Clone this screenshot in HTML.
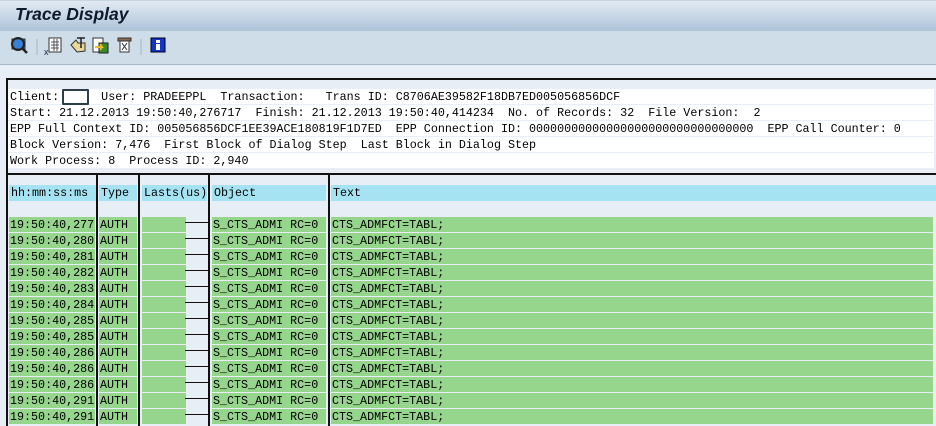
<!DOCTYPE html>
<html><head><meta charset="utf-8"><style>
*{margin:0;padding:0;box-sizing:border-box}
body{width:936px;height:426px;overflow:hidden;background:#e7eef6;position:relative;font-family:"Liberation Mono",monospace;font-size:11.7px;color:#000}
.a{position:absolute}
#title{left:0;top:0;width:936px;height:31px;background:linear-gradient(#e2eaf3,#aec4da);border-top:1px solid #c5d3e2}
#title span{position:absolute;left:15px;top:3px;font:italic bold 17.5px "Liberation Sans",sans-serif;color:#0f1a2a}
#tb{left:0;top:31px;width:936px;height:34px;background:#cfdde9;border-bottom:1px solid #a5b8cc}
.hr{left:8px;width:926px;height:15px;background:#fff;padding-left:2px;line-height:17px;white-space:pre}
.g{position:absolute;height:15px;background:#96d58c;line-height:17px;white-space:pre;padding-left:1px}
.cy{position:absolute;top:185px;height:16px;background:#a6e3f2;line-height:17px;padding-left:2px;white-space:pre}
.vl{position:absolute;top:174px;width:2px;height:252px;background:#111}
</style></head><body>
<div id="title" class="a"><span>Trace Display</span></div>
<div id="tb" class="a">
<svg width="180" height="34" style="position:absolute;left:0;top:0">
 <rect x="12" y="8" width="13" height="10" fill="#3b7fd0" stroke="#333"/>
 <circle cx="18" cy="13" r="6" fill="none" stroke="#222" stroke-width="2"/>
 <line x1="22" y1="17" x2="27" y2="22" stroke="#222" stroke-width="2.5"/>
 <line x1="37" y1="8" x2="37" y2="24" stroke="#a8b8c8"/>
 <rect x="49" y="7" width="12" height="14" fill="#fff" stroke="#333"/>
 <path d="M51 11h8M51 14h8M51 17h8M54 8v12M57 8v12" stroke="#555"/>
 <text x="44" y="24" font-size="9" font-family="Liberation Sans" fill="#224">x</text>
 <path d="M71 14l5-5 2 3 7 0 0 8-8 1z" fill="#ead79a" stroke="#333"/>
 <path d="M77 7h8M81 7v10" stroke="#222" stroke-width="1.5"/>
 <rect x="93" y="7" width="10" height="14" fill="#fff" stroke="#333"/>
 <rect x="99" y="12" width="9" height="10" fill="#3b8a2c" stroke="#222"/>
 <path d="M95 16h7l-2-3M102 16l-2 3" stroke="#e8c020" stroke-width="2" fill="none"/>
 <rect x="118" y="7" width="13" height="3" fill="#8a6a50" stroke="#333"/>
 <rect x="120" y="10" width="9" height="11" fill="#fff" stroke="#333"/>
 <path d="M122 12l5 7M127 12l-5 7" stroke="#333"/>
 <line x1="141" y1="8" x2="141" y2="24" stroke="#a8b8c8"/>
 <rect x="151" y="7" width="14" height="14" fill="#1433c8" stroke="#001"/>
 <rect x="156" y="9" width="4" height="3" fill="#fff"/><rect x="156" y="13" width="4" height="6" fill="#fff"/>
</svg></div>
<div class="a" style="left:6px;top:78px;width:930px;height:2px;background:#111"></div>
<div class="a" style="left:6px;top:78px;width:2px;height:348px;background:#111"></div>
<div class="a hr" style="top:89px">Client:      User: PRADEEPPL  Transaction:   Trans ID: C8706AE39582F18DB7ED005056856DCF</div>
<div class="a" style="left:62px;top:89px;width:27px;height:16px;border:2px solid #2c3e48;border-radius:1px;background:#fff"></div>
<div class="a hr" style="top:105px">Start: 21.12.2013 19:50:40,276717  Finish: 21.12.2013 19:50:40,414234  No. of Records: 32  File Version:  2</div>
<div class="a hr" style="top:121px">EPP Full Context ID: 005056856DCF1EE39ACE180819F1D7ED  EPP Connection ID: 00000000000000000000000000000000  EPP Call Counter: 0</div>
<div class="a hr" style="top:137px">Block Version: 7,476  First Block of Dialog Step  Last Block in Dialog Step</div>
<div class="a hr" style="top:153px">Work Process: 8  Process ID: 2,940</div>
<div class="a" style="left:6px;top:173px;width:930px;height:2px;background:#111"></div>
<div class="cy" style="left:9px;width:87px">hh:mm:ss:ms</div>
<div class="cy" style="left:99px;width:38px">Type</div>
<div class="cy" style="left:142px;width:65px">Lasts(us)</div>
<div class="cy" style="left:212px;width:114px">Object</div>
<div class="cy" style="left:331px;width:605px">Text</div>
<div id="rows"></div>
<div class="vl" style="left:96px"></div>
<div class="vl" style="left:138px"></div>
<div class="vl" style="left:208px"></div>
<div class="vl" style="left:328px"></div>
<script>
var t=["277","280","281","282","283","284","285","285","286","286","286","291","291"],h="";
t.forEach(function(s,i){var y=217+i*16;
h+='<div class="g" style="left:9px;top:'+y+'px;width:86px">19:50:40,'+s+'</div>'+
'<div class="g" style="left:99px;top:'+y+'px;width:38px">AUTH</div>'+
'<div class="g" style="left:142px;top:'+y+'px;width:44px"></div>'+
'<div class="a" style="left:185px;top:'+(y+5)+'px;width:24px;height:1px;background:#111"></div>'+
'<div class="g" style="left:212px;top:'+y+'px;width:114px">S_CTS_ADMI RC=0</div>'+
'<div class="g" style="left:331px;top:'+y+'px;width:602px">CTS_ADMFCT=TABL;</div>';});
document.getElementById("rows").innerHTML=h;
</script>
</body></html>
